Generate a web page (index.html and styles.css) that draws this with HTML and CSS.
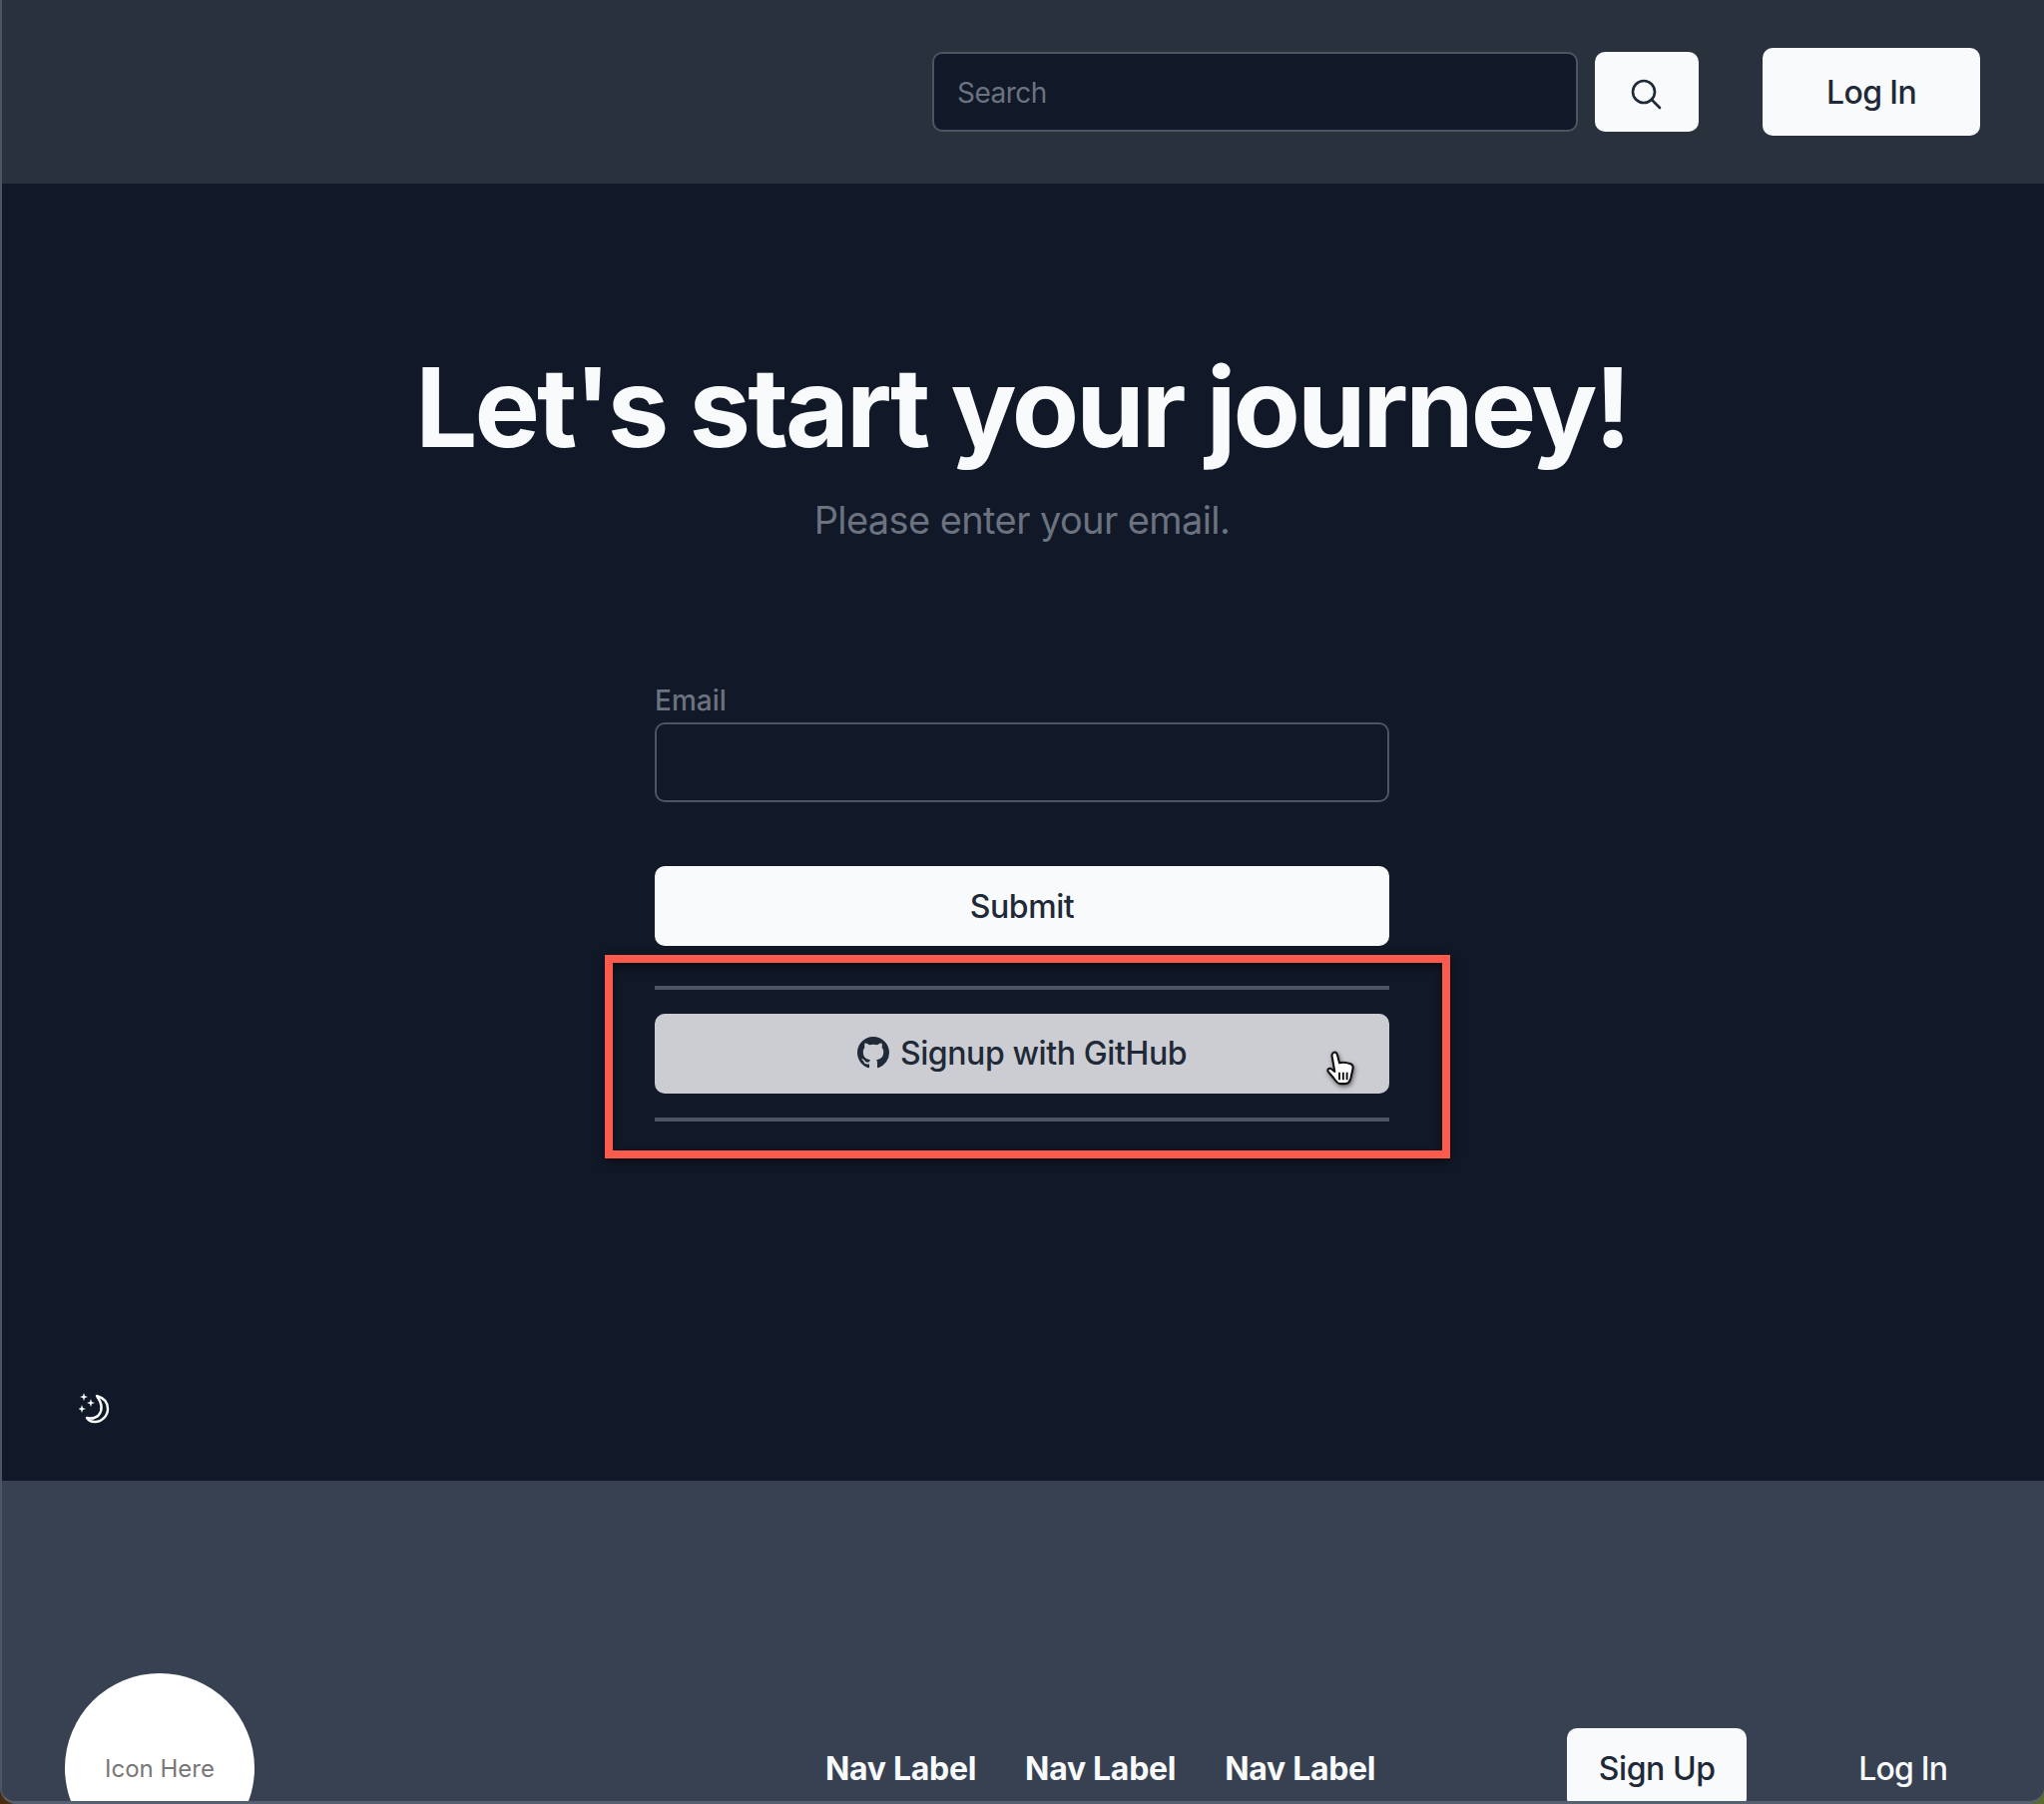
FILE: index.html
```html
<!DOCTYPE html>
<html lang="en">
<head>
    <meta charset="UTF-8">
    <meta name="viewport" content="width=device-width, initial-scale=1.0">
    <title>Sign Up</title>
    <link rel="stylesheet" href="styles.css">
</head>
<body>
    <div class="window">
        <header class="topbar">
            <input class="search-input" type="text" placeholder="Search">
            <button class="btn search-btn" aria-label="Search">
                <svg width="32" height="32" viewBox="0 0 32 32" fill="none" stroke="#1f2937" stroke-width="2.6" stroke-linecap="round">
                    <circle cx="14" cy="14" r="11"/>
                    <path d="M22 22l8 8"/>
                </svg>
            </button>
            <button class="btn login-btn">Log In</button>
        </header>

        <main class="content">
            <h1>Let's start your journey!</h1>
            <p class="subtitle">Please enter your email.</p>

            <form class="signup-form">
                <label class="field-label" for="email">Email</label>
                <input class="field-input" id="email" type="email">
                <button class="btn submit-btn" type="button">Submit</button>
                <div class="divider"></div>
                <button class="btn github-btn" type="button">
                    <svg width="32" height="32" viewBox="0 0 16 16" fill="#1f2937">
                        <path d="M8 0C3.58 0 0 3.58 0 8c0 3.54 2.29 6.53 5.47 7.59.4.07.55-.17.55-.38 0-.19-.01-.82-.01-1.49-2.01.37-2.53-.49-2.69-.94-.09-.23-.48-.94-.82-1.13-.28-.15-.68-.52-.01-.53.63-.01 1.08.58 1.23.82.72 1.21 1.87.87 2.33.66.07-.52.28-.87.51-1.07-1.78-.2-3.64-.89-3.64-3.95 0-.87.31-1.59.82-2.15-.08-.2-.36-1.02.08-2.12 0 0 .67-.21 2.2.82.64-.18 1.32-.27 2-.27s1.36.09 2 .27c1.53-1.04 2.2-.82 2.2-.82.44 1.1.16 1.92.08 2.12.51.56.82 1.27.82 2.15 0 3.07-1.87 3.75-3.65 3.95.29.25.54.73.54 1.48 0 1.07-.01 1.93-.01 2.2 0 .21.15.46.55.38A8.01 8.01 0 0 0 16 8c0-4.42-3.58-8-8-8z"/>
                    </svg>
                    Signup with GitHub
                </button>
                <div class="divider"></div>

                <div class="highlight"></div>
                <svg class="cursor" width="32" height="36" viewBox="0 0 32 38">
                    <path d="M9 2c2-1 3 0 4 3l2 8c3-1 9 0 12 1 2 1 3 3 2 6l-2 9c-1 4-3 6-6 6h-5c-3 0-5-3-7-6l-6-7c-1-2 1-4 3-3l4 3L7 5c0-1 1-3 2-3z" fill="#fff" stroke="#111" stroke-width="2.2" stroke-linejoin="round"/>
                    <path d="M15 23v8M19 23v8M23 23v8" stroke="#111" stroke-width="2" fill="none"/>
                </svg>
            </form>

            <button class="theme-toggle" aria-label="Toggle theme">
                <svg width="32" height="32" viewBox="0 0 32 32" fill="none">
                    <path d="M18 3c7 2 11 7 11 13 0 7-6 13-13 13-3 0-6-1-8-4 5 1 9 0 12-3 4-5 3-12-2-19z" fill="none" stroke="#f8fafc" stroke-width="2.4" stroke-linejoin="round"/>
                    <path d="M8 25c5 0 10-1 13-5l-1 4-6 3z" fill="#f8fafc"/>
                    <path d="M5 0l1 3 3 1-3 1-1 3-1-3-3-1 3-1zM12 6l1 3 3 1-3 1-1 3-1-3-3-1 3-1zM3 12l1 3 3 1-3 1-1 3-1-3-3-1 3-1z" fill="#f8fafc"/>
                </svg>
            </button>
        </main>

        <footer class="bottombar">
            <div class="logo-circle">Icon Here</div>
            <nav class="footer-nav">
                <a href="#">Nav Label</a>
                <a href="#">Nav Label</a>
                <a href="#">Nav Label</a>
            </nav>
            <button class="btn signup-btn">Sign Up</button>
            <a class="footer-login" href="#">Log In</a>
        </footer>
    </div>
</body>
</html>
```

FILE: styles.css
```css
* {
    box-sizing: border-box;
}

html, body {
    margin: 0;
    height: 1808px;
    overflow: hidden;
}

body {
    background: linear-gradient(90deg, #4a2c10 0%, #5a6a30 100%);
    font-family: Inter, "Liberation Sans", sans-serif;
}

.window {
    height: 1808px;
    display: grid;
    grid-template-rows: 184px 1300px 324px;
    border-left: 2px solid #4b5563;
    border-bottom: 3px solid #566170;
    border-radius: 0 0 16px 16px;
    overflow: hidden;
}

.btn {
    background: #f8fafc;
    color: #1f2937;
    border: none;
    border-radius: 10px;
    font-family: inherit;
    font-size: 32px;
    font-weight: 500;
    letter-spacing: -0.4px;
    display: flex;
    align-items: center;
    justify-content: center;
    padding: 0;
}

/* top bar */
.topbar {
    background: #29313c;
    display: flex;
    align-items: center;
    padding: 0 64px 0 932px;
}

.search-input {
    width: 647px;
    height: 80px;
    background: #111827;
    border: 2px solid #4b5563;
    border-radius: 10px;
    padding: 2px 23px 0;
    font-family: inherit;
    font-size: 28px;
    letter-spacing: -0.5px;
    color: #f8fafc;
}

.search-input::placeholder {
    color: #6b7280;
}

.search-btn {
    width: 104px;
    height: 80px;
    margin-left: 17px;
    padding: 4px 2px 0 0;
}

.login-btn {
    width: 218px;
    height: 88px;
    margin-left: 64px;
    letter-spacing: -0.6px;
}

/* main */
.content {
    position: relative;
    background: #111827;
    display: flex;
    flex-direction: column;
    align-items: center;
    padding-top: 164px;
    margin-left: -2px;
}

h1 {
    margin: 0;
    color: #f8fafc;
    font-size: 110px;
    line-height: 120px;
    font-weight: 700;
    letter-spacing: -2.95px;
}

.subtitle {
    margin: 29px 0 0;
    color: #6b7280;
    font-size: 38px;
    line-height: 48px;
    letter-spacing: -0.6px;
}

.signup-form {
    position: relative;
    width: 736px;
    margin-top: 141px;
    display: flex;
    flex-direction: column;
}

.field-label {
    color: #6b7280;
    font-size: 28px;
    font-weight: 500;
    line-height: 32px;
    margin-bottom: 6px;
}

.field-input {
    height: 80px;
    background: #111827;
    border: 2px solid #4b5563;
    border-radius: 10px;
}

.submit-btn {
    height: 80px;
    margin-top: 64px;
}

.divider {
    height: 4px;
    background: #4b5563;
    margin-top: 40px;
}

.github-btn {
    height: 80px;
    margin-top: 24px;
    padding-bottom: 2px;
    gap: 11px;
    background: #cbcdd2;
}

.github-btn + .divider {
    margin-top: 24px;
}

/* annotation drawn over the form */
.highlight {
    position: absolute;
    left: -50px;
    top: 271px;
    width: 847px;
    height: 204px;
    border: 8px solid #fc5a4c;
    box-shadow: 0 3px 8px rgba(0, 0, 0, 0.5), inset 0 4px 8px rgba(0, 0, 0, 0.5);
}

.cursor {
    position: absolute;
    left: 671px;
    top: 367px;
    filter: drop-shadow(1px 2px 2px rgba(0, 0, 0, 0.5));
}

.theme-toggle {
    position: absolute;
    left: 79px;
    top: 1212px;
    background: none;
    border: none;
    padding: 0;
    display: flex;
}

/* footer */
.bottombar {
    background: #374151;
    display: flex;
    align-items: center;
    height: 384px;
    padding: 192px 0 0 63px;
}

.logo-circle {
    width: 190px;
    height: 190px;
    border-radius: 50%;
    background: #fff;
    color: #777;
    font-size: 24px;
    display: flex;
    align-items: center;
    justify-content: center;
    flex-shrink: 0;
}

.footer-nav {
    display: flex;
    gap: 49px;
    margin-left: 572px;
}

.footer-nav a {
    color: #f8fafc;
    font-size: 32px;
    font-weight: 700;
    letter-spacing: -0.3px;
    text-decoration: none;
}

.signup-btn {
    width: 180px;
    height: 80px;
    margin-left: 192px;
    flex-shrink: 0;
}

.footer-login {
    color: #f8fafc;
    font-size: 32px;
    font-weight: 500;
    letter-spacing: -0.8px;
    text-decoration: none;
    margin-left: 112px;
}
```
